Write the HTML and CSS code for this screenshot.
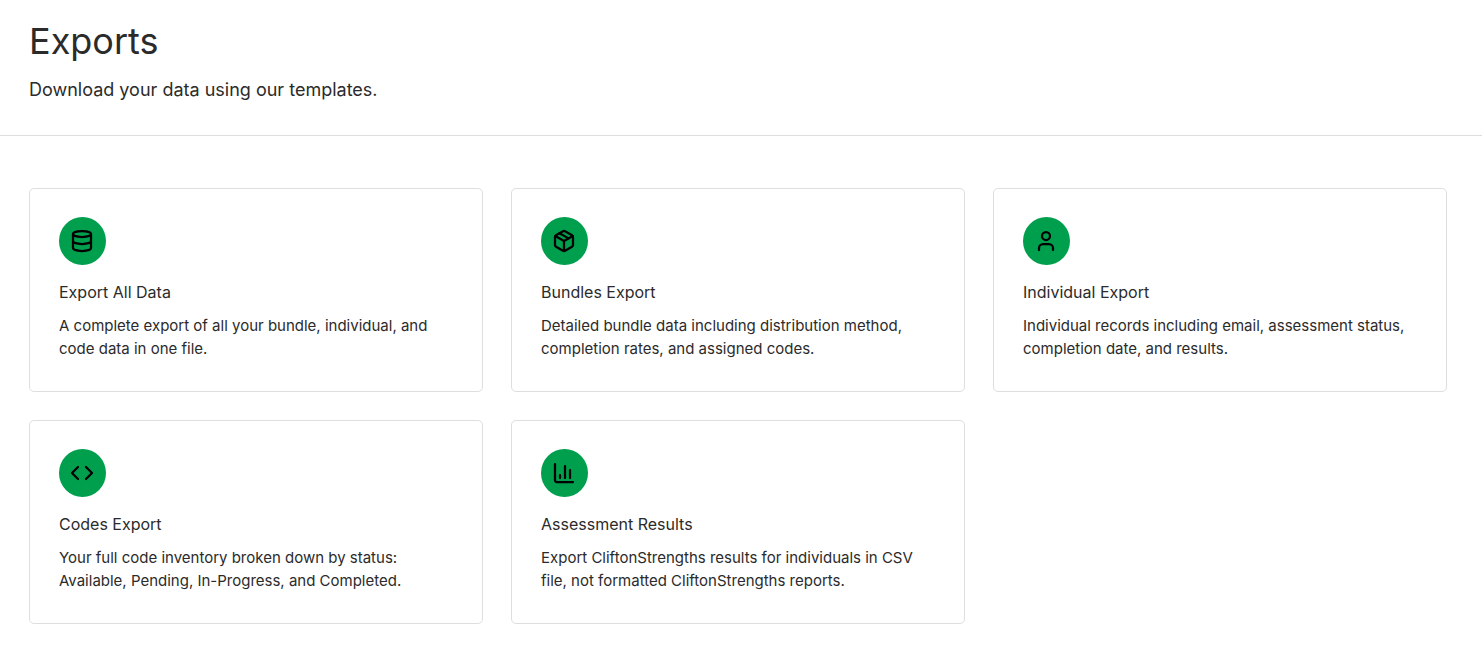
FILE: index.html
```html
<!DOCTYPE html>
<html lang="en">
  <head>
    <meta charset="UTF-8" />
    <meta name="viewport" content="width=device-width, initial-scale=1.0" />
    <title>Exports</title>
    <link rel="stylesheet" href="styles.css">
  </head>
  <body>
    <header class="page-header">
      <h1>Exports</h1>
      <p>Download your data using our templates.</p>
    </header>
    <main class="export-grid">
      <section class="card">
        <div class="card-icon">
          <svg viewBox="0 0 24 24" aria-hidden="true">
            <ellipse cx="12" cy="5" rx="9" ry="3" />
            <path d="M3 5v14c0 1.66 4 3 9 3s9-1.34 9-3V5" />
            <path d="M3 12c0 1.66 4 3 9 3s9-1.34 9-3" />
          </svg>
        </div>
        <h2>Export All Data</h2>
        <p>A complete export of all your bundle, individual, and code data in one file.</p>
      </section>
      <section class="card">
        <div class="card-icon">
          <svg viewBox="0 0 24 24" aria-hidden="true">
            <path d="M16.5 9.4l-9-5.19" />
            <path d="M21 16V8a2 2 0 0 0-1-1.73l-7-4a2 2 0 0 0-2 0l-7 4A2 2 0 0 0 3 8v8a2 2 0 0 0 1 1.73l7 4a2 2 0 0 0 2 0l7-4A2 2 0 0 0 21 16z" />
            <path d="M3.27 6.96L12 12.01l8.73-5.05M12 22.08V12" />
          </svg>
        </div>
        <h2>Bundles Export</h2>
        <p>Detailed bundle data including distribution method, completion rates, and assigned codes.</p>
      </section>
      <section class="card">
        <div class="card-icon">
          <svg viewBox="0 0 24 24" aria-hidden="true">
            <path d="M19 21v-2a4 4 0 0 0-4-4H9a4 4 0 0 0-4 4v2" />
            <circle cx="12" cy="7" r="4" />
          </svg>
        </div>
        <h2>Individual Export</h2>
        <p>Individual records including email, assessment status, completion date, and results.</p>
      </section>
      <section class="card">
        <div class="card-icon">
          <svg viewBox="0 0 24 24" aria-hidden="true">
            <path d="M16 18l6-6-6-6M8 6l-6 6 6 6" />
          </svg>
        </div>
        <h2>Codes Export</h2>
        <p>Your full code inventory broken down by status: Available, Pending, In-Progress, and Completed.</p>
      </section>
      <section class="card">
        <div class="card-icon">
          <svg viewBox="0 0 24 24" aria-hidden="true">
            <path d="M3 3v16a2 2 0 0 0 2 2h16" />
            <path d="M18 17V9M13 17V5M8 17v-3" />
          </svg>
        </div>
        <h2>Assessment Results</h2>
        <p>Export CliftonStrengths results for individuals in CSV file, not formatted CliftonStrengths reports.</p>
      </section>
    </main>
  </body>
</html>
```
FILE: styles.css
```css
:root {
  --text: #2b2b2b;
  --border: #dedede;
  --accent: #009f4d;
}
* {
  box-sizing: border-box;
  margin: 0;
  padding: 0;
}
body {
  font-family: Inter, sans-serif;
  background: #fff;
  color: var(--text);
}
.page-header {
  padding: 16px 29px 31px;
  border-bottom: 1px solid var(--border);
}
.page-header h1 {
  font-size: 36px;
  font-weight: 400;
  line-height: 50px;
  margin-bottom: 10px;
}
.page-header p {
  font-size: 18px;
  line-height: 28px;
}
.export-grid {
  display: grid;
  grid-template-columns: repeat(3, 1fr);
  gap: 28px;
  padding: 52px 35px 26px 29px;
}
.card {
  border: 1px solid var(--border);
  border-radius: 5px;
  padding: 28px 28px 31px 29px;
}
.card-icon {
  width: 47px;
  height: 48px;
  padding: 12px 12px 12px 11px;
  border-radius: 50%;
  background: var(--accent);
  margin-bottom: 16px;
}
.card-icon svg {
  display: block;
  width: 24px;
  height: 24px;
  fill: none;
  stroke: #000;
  stroke-width: 2.25;
  stroke-linecap: round;
  stroke-linejoin: round;
}
.card h2 {
  font-size: 16px;
  font-weight: 400;
  line-height: 23px;
  margin-bottom: 10px;
}
.card p {
  font-size: 15px;
  line-height: 23px;
}
```
